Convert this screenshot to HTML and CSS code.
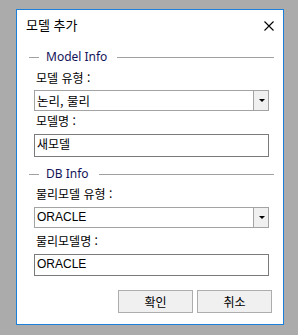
FILE: index.html
```html
<!DOCTYPE html>
<html lang="ko">
<head>
<meta charset="utf-8">
<link rel="stylesheet" href="styles.css">
</head>
<body>
<div class="window">
  <div class="titlebar">
    <span class="title">모델 추가</span>
    <svg class="close" width="10" height="10" viewBox="0 0 10 10"><path d="M0.5 0.5 L9.5 9.5 M9.5 0.5 L0.5 9.5" stroke="#000" stroke-width="1.1" fill="none"/></svg>
  </div>
  <div class="content">
    <div class="group g1"><span class="gtext">Model Info</span></div>
    <div class="label l1">모델 유형 :</div>
    <div class="select s1"><span class="value">논리, 물리</span><span class="drop"><span class="arrow"></span></span></div>
    <div class="label l2">모델명 :</div>
    <div class="input i1">새모델</div>
    <div class="group g2"><span class="gtext">DB Info</span></div>
    <div class="label l3">물리모델 유형 :</div>
    <div class="select s2"><span class="value latin">ORACLE</span><span class="drop"><span class="arrow"></span></span></div>
    <div class="label l4">물리모델명 :</div>
    <div class="input i2 latin">ORACLE</div>
    <div class="buttons">
      <button class="btn">확인</button>
      <button class="btn">취소</button>
    </div>
  </div>
</div>
</body>
</html>
```

FILE: styles.css
```css
* { box-sizing: border-box; }
html, body { margin: 0; padding: 0; }
body {
  background: #ababab;
  width: 298px;
  height: 335px;
  padding: 9px 0 0 16px;
  font-family: "Noto Sans CJK KR", "Noto Sans", sans-serif;
  color: #000;
}
.window {
  width: 268px;
  height: 316px;
  background: #fff;
  border: 1px solid #1a80d9;
  display: flex;
  flex-direction: column;
}
.titlebar {
  height: 30px;
  display: flex;
  align-items: center;
  justify-content: space-between;
  padding: 0 9px 0 9px;
}
.title {
  font-size: 13px;
  line-height: 16px;
}
.close { display: block; margin-top: 1px; }
.content {
  display: flex;
  flex-direction: column;
  padding: 0 14px 0 17px;
}
.group {
  display: flex;
  align-items: center;
  height: 12px;
  margin-left: -5px;
  margin-right: -5px;
}
.group::before {
  content: "";
  width: 10px;
  height: 1px;
  background: #a0a0a0;
  margin-right: 7px;
}
.group::after {
  content: "";
  flex: 1;
  height: 1px;
  background: #a0a0a0;
  margin-left: 10px;
}
.gtext {
  font-family: "Noto Sans", sans-serif;
  font-size: 12px;
  line-height: 12px;
  color: #14145a;
}
.g1 { margin-top: 11px; }
.g2 { margin-top: 11px; }
.label {
  font-size: 12px;
  line-height: 14px;
  padding-left: 2px;
}
.l1 { margin-top: 8px; }
.l2 { margin-top: 3px; }
.l3 { margin-top: 7px; }
.l4 { margin-top: 6px; }
.select {
  height: 21px;
  border: 1px solid #a3a3a3;
  display: flex;
  margin-top: 5px;
}
.s2 { margin-top: 6px; }
.value {
  flex: 1;
  font-size: 12.5px;
  line-height: 19px;
  padding-left: 2px;
}
.latin {
  font-family: "Liberation Sans", "Noto Sans", sans-serif;
  font-size: 12px;
}
.drop {
  width: 15px;
  background: #f0f0f0;
  border-left: 1px solid #a3a3a3;
  display: flex;
  align-items: center;
  justify-content: center;
}
.arrow {
  width: 0;
  height: 0;
  border-left: 3px solid transparent;
  border-right: 3px solid transparent;
  border-top: 3px solid #000;
  margin-left: 1px;
}
.input {
  height: 23px;
  border: 1px solid #7a7a7a;
  font-size: 12px;
  line-height: 18px;
  padding-left: 2px;
  margin-top: 6px;
}
.i2 { height: 22px; line-height: 19px; }
.buttons {
  display: flex;
  justify-content: flex-end;
  gap: 4px;
  margin-top: 14px;
  margin-right: -3px;
}
.btn {
  width: 75px;
  height: 23px;
  border: 1px solid #adadad;
  background: #f0f0f0;
  font-family: "Noto Sans CJK KR", sans-serif;
  font-size: 12px;
  line-height: 16px;
  padding: 0;
  color: #000;
}
```
